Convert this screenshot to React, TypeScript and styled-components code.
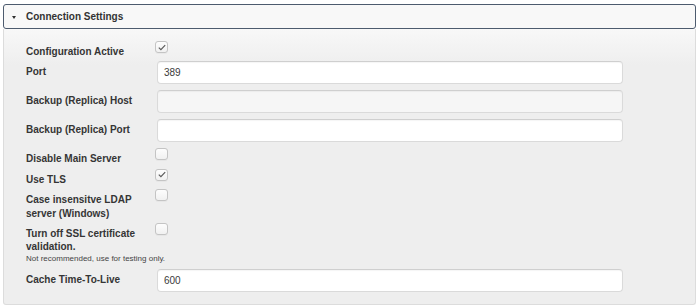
import React from "react";
import styled, { createGlobalStyle } from "styled-components";

const Global = createGlobalStyle`
  html, body { margin: 0; padding: 0; background: #fff; }
  body { font-family: "Liberation Sans", Arial, sans-serif; color: #333; }
`;

const Panel = styled.section`
  margin: 4px 4px 0 3px;
  border-radius: 3px;
`;

const Header = styled.div`
  display: flex;
  align-items: center;
  gap: 10px;
  height: 23px;
  padding-left: 8px;
  border: 1px solid #4d5b6e;
  border-radius: 3px;
  background: #f8f8f8;
  font-size: 10px;
  font-weight: bold;
  color: #333;
`;

const Caret = styled.span`
  width: 0;
  height: 0;
  border-left: 2.5px solid transparent;
  border-right: 2.5px solid transparent;
  border-top: 3.5px solid #2f2f2f;
  margin-top: 1px;
`;

const Body = styled.div`
  display: flex;
  flex-direction: column;
  gap: 3px;
  padding: 12px 0 12px 22px;
  border: 1px solid #dcdcdc;
  border-top: none;
  border-radius: 0 0 3px 3px;
  background: linear-gradient(#f8f8f8 0px, #eeeeee 36px, #eeeeee 100%);
`;

const Row = styled.div<{ $input?: boolean }>`
  display: flex;
  align-items: flex-start;
  padding-bottom: ${(p) => (p.$input ? "3px" : "0")};
`;

const Group = styled.div<{ $after?: number }>`
  display: flex;
  flex-direction: column;
  padding-bottom: ${(p) => p.$after ?? 0}px;
`;

const Label = styled.label`
  width: 129px;
  flex: none;
  box-sizing: border-box;
  padding: 4px 6px 0 0;
  font-size: 10px;
  line-height: 13.4px;
  font-weight: bold;
  color: #353535;
`;

const Note = styled.div`
  font-size: 8px;
  line-height: 10px;
  color: #444;
`;

const TextInput = styled.input`
  box-sizing: border-box;
  width: 466px;
  height: 23px;
  margin: 0 0 0 2px;
  padding: 0 6px;
  border: 1px solid #dadada;
  border-top-color: #cfcfcf;
  border-radius: 4px;
  background: ${(p) => (p.disabled ? "#f6f6f6" : "#fff")};
  box-shadow: inset 0 1px 1px rgba(0, 0, 0, 0.04);
  font-family: "Liberation Sans", Arial, sans-serif;
  font-size: 10px;
  color: #3a3a3a;
  outline: none;
`;

const Box = styled.span`
  box-sizing: border-box;
  display: inline-flex;
  align-items: center;
  justify-content: center;
  width: 13px;
  height: 12px;
  border: 1px solid #c4c4c4;
  border-radius: 3px;
  background: linear-gradient(#fdfdfd, #f1f1f1);
  box-shadow: 0 1px 0 rgba(0, 0, 0, 0.03);
`;

const Checkbox = ({ checked }: { checked?: boolean }) => (
  <Box>
    {checked && (
      <svg width="8" height="7" viewBox="0 0 8 7">
        <path d="M0.8 3.6 L2.9 5.6 L7.2 1.2" fill="none" stroke="#5a5a5a" strokeWidth="1.2" />
      </svg>
    )}
  </Box>
);

export default function App() {
  return (
    <>
      <Global />
      <Panel>
        <Header>
          <Caret />
          Connection Settings
        </Header>
        <Body>
          <Row>
            <Label>Configuration Active</Label>
            <Checkbox checked />
          </Row>
          <Row $input>
            <Label>Port</Label>
            <TextInput defaultValue="389" readOnly />
          </Row>
          <Row $input>
            <Label>Backup (Replica) Host</Label>
            <TextInput disabled />
          </Row>
          <Row $input>
            <Label>Backup (Replica) Port</Label>
            <TextInput readOnly />
          </Row>
          <Row>
            <Label>Disable Main Server</Label>
            <Checkbox />
          </Row>
          <Row>
            <Label>Use TLS</Label>
            <Checkbox checked />
          </Row>
          <Row>
            <Label>Case insensitve LDAP server (Windows)</Label>
            <Checkbox />
          </Row>
          <Group $after={2}>
            <Row>
              <Label>Turn off SSL certificate validation.</Label>
              <Checkbox />
            </Row>
            <Note>Not recommended, use for testing only.</Note>
          </Group>
          <Row>
            <Label>Cache Time-To-Live</Label>
            <TextInput defaultValue="600" readOnly />
          </Row>
        </Body>
      </Panel>
    </>
  );
}
